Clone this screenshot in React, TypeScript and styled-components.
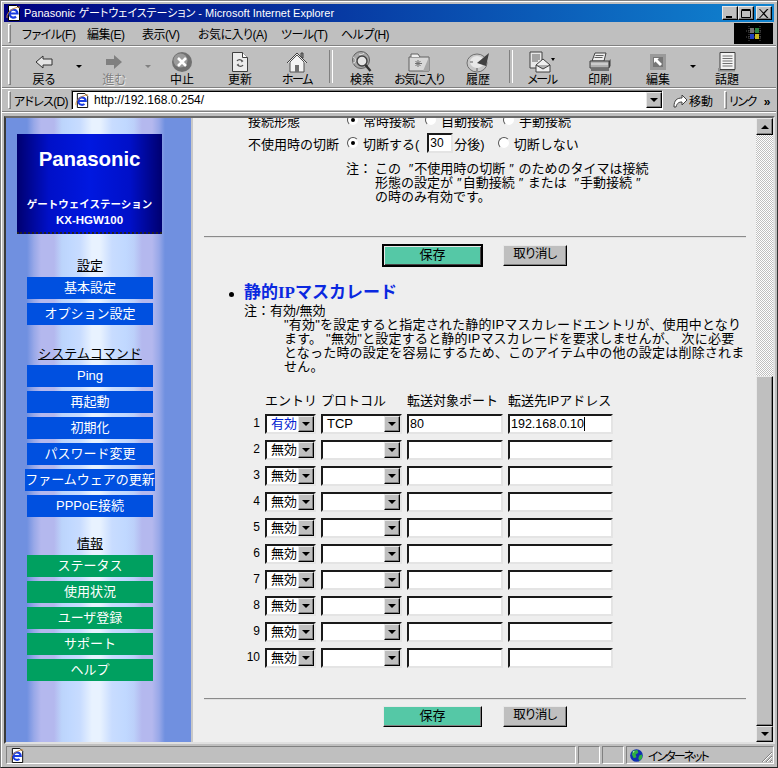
import React from "react";
import styled, { createGlobalStyle, css } from "styled-components";

const FONT = `"Liberation Sans", "Noto Sans CJK JP", sans-serif`;
const FACE = "#bfbfbf";

const Global = createGlobalStyle`
  html, body { margin: 0; padding: 0; background: ${FACE}; }
  * { box-sizing: border-box; }
`;

const sunken = css`
  border-style: solid;
  border-width: 2px;
  border-color: #1a1a1a #e4e4e4 #e4e4e4 #1a1a1a;
`;
const raised = css`
  border-style: solid;
  border-width: 1px;
  border-color: #e8e8e8 #000 #000 #e8e8e8;
  box-shadow: inset -1px -1px 0 #808080;
`;
const checker = css`
  background: repeating-conic-gradient(#fff 0 25%, ${FACE} 0 50%) 0 0 / 2px 2px;
`;
const palt = css`
  font-feature-settings: "palt";
`;

const Win = styled.div`
  width: 778px;
  height: 768px;
  overflow: hidden;
  background: ${FACE};
  padding: 4px 4px 0 4px;
  display: flex;
  flex-direction: column;
  font: 12px ${FONT};
  color: #000;
  border: 1px solid #808080;
  border-right-color: #333;
  border-bottom-color: #222;
  box-shadow: inset 1px 1px 0 #fff;
`;
const Title = styled.div`
  height: 18px;
  margin: -1px -1px 0 -1px;
  display: flex;
  align-items: center;
  gap: 2px;
  padding: 0 2px 0 2px;
  background: linear-gradient(90deg, #000080, #1084d0);
  color: #fff;
  flex: none;
  white-space: nowrap;
`;
const TitleText = styled.span`
  flex: 1;
  font-size: 11px;
  line-height: 18px;
  ${palt};
`;
const CapBtn = styled.div<{ $gap?: boolean }>`
  width: 16px;
  height: 14px;
  background: ${FACE};
  ${raised};
  margin-left: ${(p) => (p.$gap ? 2 : 0)}px;
  display: flex;
  align-items: center;
  justify-content: center;
`;
const CapGroup = styled.div`
  display: flex;
  flex: none;
`;
const Band = styled.div<{ $h: number }>`
  height: ${(p) => p.$h}px;
  margin: 0 -3px 1px;
  flex: none;
  display: flex;
  align-items: stretch;
  border-bottom: 1px solid #808080;
  box-shadow: 0 1px 0 #fff;
  padding: 0 3px;
`;
const Grip = styled.div`
  width: 3px;
  margin: 2px 0 2px 3px;
  border: 1px solid;
  border-color: #fff #808080 #808080 #fff;
  flex: none;
`;
const Menu = styled.div`
  flex: 1;
  display: flex;
  align-items: center;
  white-space: nowrap;
  padding-left: 11px;
`;
const MenuItem = styled.span<{ $w: number }>`
  width: ${(p) => p.$w}px;
  flex: none;
  font-size: 12px;
  letter-spacing: -0.5px;
  ${palt};
`;
const Throbber = styled.div`
  width: 39px;
  background: #000;
  margin: 1px 0;
  display: flex;
  align-items: center;
  justify-content: center;
  flex: none;
`;
const ToolStrip = styled.div`
  flex: 1;
  display: flex;
  padding-left: 4px;
`;
const Tool = styled.div<{ $w: number; $off?: boolean; $tight?: boolean }>`
  width: ${(p) => p.$w}px;
  flex: none;
  display: flex;
  flex-direction: column;
  align-items: center;
  padding-top: 4px;
  font-size: 12px;
  line-height: 14px;
  letter-spacing: ${(p) => (p.$tight ? -1.5 : 0)}px;
  ${palt};
  color: ${(p) => (p.$off ? "#808080" : "#000")};
  text-shadow: ${(p) => (p.$off ? "1px 1px 0 #e8e8e8" : "none")};
  white-space: nowrap;
`;
const ToolIconBox = styled.div`
  height: 22px;
  display: flex;
  align-items: center;
  justify-content: center;
`;
const DropBox = styled.div<{ $w: number; $off?: boolean }>`
  width: ${(p) => p.$w}px;
  flex: none;
  display: flex;
  justify-content: center;
  padding-top: 18px;
  &::before {
    content: "";
    width: 0;
    height: 0;
    border: 3px solid transparent;
    border-top: 3px solid ${(p) => (p.$off ? "#808080" : "#000")};
  }
`;
const ToolSep = styled.div`
  width: 12px;
  flex: none;
  display: flex;
  justify-content: center;
  padding: 3px 0 4px;
  &::before {
    content: "";
    width: 2px;
    border-left: 1px solid #808080;
    border-right: 1px solid #fff;
  }
`;
const AddrLabel = styled.span`
  flex: none;
  width: 60px;
  padding-left: 3px;
  align-self: center;
  font-size: 12px;
  letter-spacing: -0.7px;
  white-space: nowrap;
  ${palt};
`;
const AddrField = styled.div`
  width: 592px;
  flex: none;
  background: #fff;
  margin: 1px 0 0;
  height: 20px;
  border: 1px solid;
  border-color: #808080 #fff #fff #808080;
  box-shadow: inset 1px 1px 0 #000;
  display: flex;
  align-items: center;
  padding-left: 3px;
  gap: 4px;
  font-size: 12px;
`;
const AddrValue = styled.span`
  flex: 1;
`;
const Arrow = styled.span<{ $size?: number }>`
  width: 0;
  height: 0;
  border: ${(p) => p.$size ?? 4}px solid transparent;
  border-top-color: #000;
  border-bottom-width: 0;
`;
const ArrowUp = styled(Arrow)`
  border-top-width: 0;
  border-top-color: transparent;
  border-bottom-width: ${(p) => p.$size ?? 4}px;
  border-bottom-color: #000;
`;
const AddrDrop = styled.div`
  width: 16px;
  height: 16px;
  background: ${FACE};
  ${raised};
  display: flex;
  align-items: center;
  justify-content: center;
`;
const GoBtn = styled.div`
  width: 55px;
  flex: none;
  display: flex;
  align-items: center;
  justify-content: flex-end;
  gap: 1px;
  font-size: 12px;
  padding-right: 5px;
`;
const LinksSep = styled.div`
  width: 3px;
  margin: 2px 0 2px 6px;
  border: 1px solid;
  border-color: #fff #808080 #808080 #fff;
  flex: none;
`;
const Links = styled.span`
  flex: 1;
  align-self: center;
  padding-left: 2px;
  font-size: 12px;
  letter-spacing: -1.5px;
  white-space: nowrap;
  ${palt};
`;
const Chev = styled.b`
  font-size: 12px;
  margin-left: 8px;
  letter-spacing: 0;
`;

const Frame = styled.div`
  height: 628px;
  margin: 3px -2px 0 -1px;
  flex: none;
  display: flex;
  border: 2px solid;
  border-color: #6a6a6a #e0e0e0 #e0e0e0 #3a3a3a;
  overflow: hidden;
  background: #fff;
`;
const Side = styled.nav`
  width: 187px;
  flex: none;
  padding: 16px 0 0 11px;
  border-right: 2px solid #c8c8c8;
  background: linear-gradient(
    90deg,
    #7090e0 0,
    #7090e0 21px,
    #98a8e8 28px,
    #b4b8ee 35px,
    #b4b8ee 48px,
    #bcd4fb 56px,
    #c0d8ff 64px,
    #c8dcff 74px,
    #e8f2ff 86px,
    #e8f2ff 94px,
    #c8dcff 106px,
    #c0d8ff 120px,
    #bcd0fa 128px,
    #b4b8ee 136px,
    #b4b8ee 146px,
    #98a8e8 153px,
    #7090e0 159px,
    #7090e0 100%
  );
`;
const Logo = styled.div`
  width: 145px;
  height: 100px;
  background: linear-gradient(90deg, #000070 0, #0010c8 22%, #0018e0 50%, #0010c8 78%, #000070 100%);
  border-bottom: 2px dotted #222;
  color: #fff;
  display: flex;
  flex-direction: column;
  align-items: center;
`;
const LogoBrand = styled.div`
  font: bold 20.5px/22px "Liberation Sans", sans-serif;
  margin-top: 14px;
  letter-spacing: -0.1px;
`;
const LogoSub = styled.div`
  font: bold 10.5px/16px ${FONT};
  margin-top: 26px;
  white-space: nowrap;
`;
const LogoModel = styled.div`
  font: bold 11.5px/16px ${FONT};
  white-space: nowrap;
`;
const NavHead = styled.div<{ $top: number }>`
  width: 126px;
  margin: ${(p) => p.$top}px 0 4px 10px;
  height: 14px;
  line-height: 14px;
  text-align: center;
  font-size: 13px;
  text-decoration: underline;
  white-space: nowrap;
  color: #000;
`;
const NavBtn = styled.div<{ $green?: boolean; $wide?: boolean }>`
  width: ${(p) => (p.$wide ? 130 : 126)}px;
  height: 22px;
  margin: 0 0 4px ${(p) => (p.$wide ? 8 : 10)}px;
  background: ${(p) => (p.$green ? "#00a060" : "#0050e0")};
  color: #fff;
  font-size: 13px;
  line-height: 21px;
  text-align: center;
  white-space: nowrap;
`;
const MainCol = styled.main`
  flex: 1;
  min-width: 0;
  overflow: hidden;
  background: #eeeeee;
  padding: 0 10px 0 11px;
  font-size: 13px;
  white-space: nowrap;
`;
const Cut = styled.div`
  height: 16px;
  margin-top: -6px;
  padding-left: 44px;
  display: flex;
  align-items: center;
`;
const CutLabel = styled.span`
  width: 99px;
`;
const CutOpt = styled.span`
  display: inline-flex;
  align-items: center;
  margin-right: 10px;
`;
const FormRow = styled.div`
  height: 20px;
  margin-top: 5px;
  padding-left: 44px;
  display: flex;
  align-items: center;
`;
const FormLabel = styled.span`
  width: 99px;
  flex: none;
`;
const Radio = styled.span<{ $on?: boolean }>`
  width: 12px;
  height: 12px;
  border-radius: 50%;
  flex: none;
  background: #fff;
  border: 1px solid;
  border-color: #555 #eee #eee #555;
  display: inline-flex;
  align-items: center;
  justify-content: center;
  margin-right: 4px;
  &::after {
    content: "";
    width: 4px;
    height: 4px;
    border-radius: 50%;
    background: ${(p) => (p.$on ? "#000" : "transparent")};
  }
`;
const MinInput = styled.input`
  width: 26px;
  height: 20px;
  margin: 0 1px 0 8px;
  padding: 0 0 0 1px;
  background: #fff;
  font: 12px ${FONT};
  outline: none;
  ${sunken};
`;
const Spaced = styled.span`
  margin-right: 13px;
`;
const NoteBlock = styled.div`
  margin: 9px 0 0 142px;
  display: flex;
  line-height: 14px;
`;
const NoteTag = styled.span`
  width: 29px;
  flex: none;
`;
const Q = styled.span`
  padding-left: 4px;
  padding-right: 1px;
`;
const Rule = styled.div<{ $top: number }>`
  height: 2px;
  margin-top: ${(p) => p.$top}px;
  background: #8a8a8a;
  border-bottom: 1px solid #e0e0e0;
`;
const Actions = styled.div<{ $top: number }>`
  display: flex;
  margin: ${(p) => p.$top}px 0 0 179px;
  height: 21px;
  gap: 21px;
`;
const BaseBtn = styled.button`
  height: 21px;
  padding: 0 0 2px;
  font: 13px/15px ${FONT};
  color: #000;
  ${raised};
`;
const SaveBtn = styled(BaseBtn)<{ $focus?: boolean }>`
  width: 99px;
  background: #55c8a6;
  ${(p) => p.$focus && "outline: 1px solid #000; border-color: #000; box-shadow: inset 1px 1px 0 #e8e8e8, inset -1px -1px 0 #444;"}
`;
const CancelBtn = styled(BaseBtn)`
  width: 64px;
  background: ${FACE};
  font-size: 12.5px;
  letter-spacing: -0.6px;
  ${palt};
`;
const SectionHead = styled.div`
  display: flex;
  align-items: center;
  height: 20px;
  margin: 17px 0 0 25px;
`;
const Bullet = styled.span`
  width: 5px;
  height: 5px;
  border-radius: 50%;
  background: #000;
  margin-right: 10px;
  margin-top: 3px;
`;
const SectionTitle = styled.h2`
  margin: 0;
  font: bold 17px/20px "Liberation Serif", "Noto Sans CJK JP", serif;
  color: #0a28e0;
`;
const Notes = styled.div`
  margin: 1px 0 0 40px;
  line-height: 14px;
  font-size: 13px;
`;
const NoteBody = styled.div`
  padding-left: 40px;
  letter-spacing: 0.2px;
`;
const HeadGrid = styled.div`
  display: grid;
  grid-template-columns: 25px 51px 81px 96px 105px;
  column-gap: 5px;
  height: 14px;
  line-height: 14px;
  margin: 20px 0 0 31px;
`;
const HeadCell = styled.div<{ $col: number }>`
  grid-column: ${(p) => p.$col};
`;
const Grid = styled.div`
  display: grid;
  grid-template-columns: 25px 51px 81px 96px 105px;
  column-gap: 5px;
  grid-auto-rows: 20px;
  row-gap: 6px;
  margin: 6px 0 0 31px;
`;
const Num = styled.div`
  text-align: right;
  font-size: 12px;
  line-height: 18px;
`;
const Sel = styled.div<{ $on?: boolean }>`
  height: 20px;
  background: #fff;
  ${sunken};
  display: flex;
  align-items: center;
  padding-left: 4px;
  font-size: 13px;
  line-height: 14px;
  color: ${(p) => (p.$on ? "#0020d0" : "#000")};
`;
const SelBtn = styled.div`
  width: 16px;
  height: 16px;
  margin-left: auto;
  background: ${FACE};
  ${raised};
  display: flex;
  align-items: center;
  justify-content: center;
  flex: none;
`;
const Field = styled.input`
  height: 20px;
  min-width: 0;
  width: 100%;
  background: #fff;
  padding: 0 0 1px 1px;
  font: 12.5px ${FONT};
  outline: none;
  ${sunken};
`;
const Caret = styled.div`
  position: relative;
  &::after {
    content: "";
    position: absolute;
    left: 76px;
    top: 3px;
    width: 1px;
    height: 14px;
    background: #000;
  }
`;
const Scroll = styled.div`
  width: 17px;
  flex: none;
  display: flex;
  flex-direction: column;
  ${checker};
`;
const ScrollBtn = styled.div<{ $h?: number }>`
  width: 17px;
  height: ${(p) => p.$h ?? 17}px;
  flex: none;
  background: ${FACE};
  ${raised};
  display: flex;
  align-items: center;
  justify-content: center;
`;
const ScrollGap = styled.div`
  height: 241px;
  flex: none;
`;
const Thumb = styled.div`
  flex: 1;
  background: ${FACE};
  ${raised};
`;
const Status = styled.div`
  height: 18px;
  margin: 2px -3px 0;
  padding: 0 2px 0 4px;
  display: flex;
  gap: 2px;
  flex: none;
`;
const StatusCell = styled.div<{ $w?: number }>`
  ${(p) => (p.$w ? `width: ${p.$w}px; flex: none;` : "flex: 1;")}
  border: 1px solid;
  border-color: #808080 #fff #fff #808080;
  display: flex;
  align-items: center;
  padding-left: 3px;
  gap: 5px;
  font-size: 12px;
  white-space: nowrap;
  letter-spacing: -2px;
  ${palt};
`;
const SizeGrip = styled.div`
  margin-left: auto;
  align-self: flex-end;
  display: flex;
`;

const IeLogo = ({ s = 14, page = false }: { s?: number; page?: boolean }) => (
  <svg width={s} height={s} viewBox="0 0 16 16">
    {page && <path d="M2.5 0.5h8l3 3v12h-11z" fill="#fff" stroke="#000" />}
    <path d="M4 8.5h7.5a4 4 0 1 0-1.4 3.2" fill="none" stroke="#1a3ce0" strokeWidth="2.2" />
    <path d="M1 13 C0 7 8 2 14 2" fill="none" stroke="#d89030" strokeWidth="0.9" />
  </svg>
);
const Globe = () => (
  <svg width="13" height="15" viewBox="0 0 14 16">
    <circle cx="7" cy="8" r="6.8" fill="#1030b0" />
    <path d="M3 3l5-1 1 3-3 2 1 3-3 1-2-4zM10 8l3-1 0 4-3 3-1-3z" fill="#30b040" />
    <path d="M3 4l2-1-1 2z" fill="#e0ffe0" />
  </svg>
);
const Flag = () => (
  <svg width="24" height="22" viewBox="0 0 24 22">
    <path d="M4 8h16M4 14h16M7 3v16M18 3v16" stroke="#555" strokeDasharray="1 1" />
    <rect x="8" y="5" width="4" height="5" fill="#707070" />
    <rect x="13" y="5" width="4" height="5" fill="#2a8040" />
    <rect x="8" y="11" width="4" height="5" fill="#2040c0" />
    <rect x="13" y="11" width="4" height="5" fill="#c8b820" />
  </svg>
);

const IconBack = () => (
  <svg width="18" height="14" viewBox="0 0 18 14">
    <path d="M1 7 8 1v3h9v6H8v3z" fill="#e4e4e4" stroke="#303030" />
  </svg>
);
const IconForward = () => (
  <svg width="18" height="16" viewBox="0 0 18 16">
    <path d="M17 8 9 1v4H1v6h8v4z" fill="#808080" />
  </svg>
);
const IconStop = () => (
  <svg width="22" height="22" viewBox="0 0 22 22">
    <circle cx="11" cy="11" r="10" fill="#707070" />
    <circle cx="9.5" cy="9.5" r="7" fill="#9a9a9a" />
    <path d="M7 7l8 8M15 7l-8 8" stroke="#fff" strokeWidth="2.6" />
  </svg>
);
const IconRefresh = () => (
  <svg width="18" height="22" viewBox="0 0 18 22">
    <path d="M1.5 1.5h10l5 5v14h-15z" fill="#ececec" stroke="#404040" />
    <path d="M11.5 1.5v5h5" fill="#fff" stroke="#404040" />
    <path d="M6 10a3 3 0 0 1 5 0M12 14a3 3 0 0 1-5 0" fill="none" stroke="#505050" strokeWidth="1.3" />
    <path d="M10 8.5l2.5 1.5-2 1.5zM8 15.5l-2.5-1.5 2-1.5z" fill="#505050" />
  </svg>
);
const IconHome = () => (
  <svg width="22" height="22" viewBox="0 0 22 22">
    <path d="M15 2h2v5h-2z" fill="#909090" stroke="#404040" />
    <path d="M1 12 11 2l10 10" fill="#e8e8e8" stroke="#404040" />
    <path d="M4 11v10h14V11L11 4z" fill="#f4f4f4" stroke="#505050" />
    <path d="M9 14h4v7H9z" fill="#707070" />
  </svg>
);
const IconSearch = () => (
  <svg width="22" height="22" viewBox="0 0 22 22">
    <circle cx="10" cy="9" r="8.5" fill="#a8a8a8" stroke="#606060" />
    <circle cx="11" cy="10" r="5" fill="#e4e4e4" stroke="#404040" strokeWidth="1.4" />
    <path d="M2 6c4 2 3 6 0 6M13 2c-2 2-4 2-5 1" stroke="#e0e0e0" fill="none" />
    <path d="M14.5 14l5 6" stroke="#303030" strokeWidth="2.4" />
  </svg>
);
const IconFav = () => (
  <svg width="22" height="20" viewBox="0 0 22 20">
    <path d="M1 5h20v14H1z" fill="#d8d8d8" stroke="#606060" />
    <path d="M3 5V2h7l2 3" fill="#f0f0f0" stroke="#606060" />
    <path d="M21 5v14h-6z" fill="#a8a8a8" />
    <path d="M10 8v7M7 11.5h7M7.5 9l5 5M12.5 9l-5 5" stroke="#707070" />
  </svg>
);
const IconHistory = () => (
  <svg width="24" height="22" viewBox="0 0 24 22">
    <ellipse cx="11" cy="12" rx="10" ry="9" fill="#c8c8c8" stroke="#707070" />
    <ellipse cx="11" cy="11" rx="7" ry="6" fill="#e8e8e8" />
    <path d="M11 12 23 2l-3 13z" fill="#404040" />
    <path d="M4 11h3M11 17v3" stroke="#606060" />
  </svg>
);
const IconMail = () => (
  <svg width="26" height="22" viewBox="0 0 26 22">
    <path d="M1 1h12v16H1z" fill="#e8e8e8" stroke="#404040" />
    <path d="M3 4h8M3 6h8M3 8h8M3 10h6" stroke="#606060" />
    <path d="M7 14l7-6 7 6v7H7z" fill="#f0f0f0" stroke="#404040" />
    <path d="M7 14l7 4 7-4" fill="#b0b0b0" stroke="#404040" />
    <path d="M22 7h4l-2 3z" fill="#000" />
  </svg>
);
const IconPrint = () => (
  <svg width="22" height="20" viewBox="0 0 22 20">
    <path d="M6 1h11l-2 8H3z" fill="#f0f0f0" stroke="#404040" />
    <path d="M6.5 3.5h8M5.5 5.5h8" stroke="#606060" />
    <path d="M1 9h19v7H1z" fill="#b0b0b0" stroke="#404040" />
    <path d="M20 9l1.5-2v7L20 16" fill="#404040" />
    <path d="M2 16h18v3H2z" fill="#707070" />
    <path d="M2 12h17" stroke="#e8e8e8" />
  </svg>
);
const IconEdit = () => (
  <svg width="18" height="18" viewBox="0 0 18 18">
    <rect width="16" height="16" x="1" y="1" fill="#9a9a9a" />
    <rect width="10" height="10" x="4" y="4" fill="#777" />
    <path d="M5 5h5L8.5 6.5 13 11l-2 2-4.5-4.5L5 10z" fill="#fff" />
  </svg>
);
const IconTalk = () => (
  <svg width="20" height="22" viewBox="0 0 20 22">
    <path d="M3 1.5h15v17H3z" fill="#f4f4f4" stroke="#404040" />
    <path d="M1 19v-2h2v2h15v1.5H1z" fill="#909090" />
    <path d="M5.5 5h10M5.5 7.5h10M5.5 10h10M5.5 12.5h10M5.5 15h10" stroke="#707070" />
  </svg>
);
const IconGo = () => (
  <svg width="16" height="16" viewBox="0 0 16 16">
    <path d="M2 15C2 8 5 6 10 6V3l5 5-5 5v-3c-3 0-5 1-6 5z" fill="#fff" stroke="#404040" />
  </svg>
);

const Cap = ({ k }: { k: "min" | "max" | "x" }) => (
  <svg width="10" height="9" viewBox="0 0 10 9">
    {k === "min" && <path d="M1 7h6v2H1z" fill="#000" />}
    {k === "max" && <path d="M0.5 1.5h9v7h-9zM0.5 0.5h9" fill="none" stroke="#000" />}
    {k === "x" && <path d="M1 0l3.5 3.5L8 0h1.5L5.5 4.5l4 4.5H8L4.5 5.5 1 9H0l4-4.5L0 0z" fill="#000" />}
  </svg>
);

const menus: [string, number][] = [
  ["ファイル(F)", 65],
  ["編集(E)", 55],
  ["表示(V)", 56],
  ["お気に入り(A)", 83],
  ["ツール(T)", 60],
  ["ヘルプ(H)", 60],
];

const sysCmds = ["Ping", "再起動", "初期化", "パスワード変更"];
const info = ["ステータス", "使用状況", "ユーザ登録", "サポート", "ヘルプ"];
const rows = [1, 2, 3, 4, 5, 6, 7, 8, 9, 10];

export default function App() {
  return (
    <>
      <Global />
      <Win>
        <Title>
          <IeLogo s={16} page />
          <TitleText>Panasonic ゲートウェイステーション - Microsoft Internet Explorer</TitleText>
          <CapGroup>
            <CapBtn><Cap k="min" /></CapBtn>
            <CapBtn><Cap k="max" /></CapBtn>
            <CapBtn $gap><Cap k="x" /></CapBtn>
          </CapGroup>
        </Title>
        <Band $h={24}>
          <Grip />
          <Menu>
            {menus.map(([m, w]) => (
              <MenuItem key={m} $w={w}>{m}</MenuItem>
            ))}
          </Menu>
          <Throbber><Flag /></Throbber>
        </Band>
        <Band $h={41}>
          <Grip />
          <ToolStrip>
            <Tool $w={58}><ToolIconBox><IconBack /></ToolIconBox>戻る</Tool>
            <DropBox $w={12} />
            <Tool $w={58} $off><ToolIconBox><IconForward /></ToolIconBox>進む</Tool>
            <DropBox $w={10} $off />
            <Tool $w={58}><ToolIconBox><IconStop /></ToolIconBox>中止</Tool>
            <Tool $w={58}><ToolIconBox><IconRefresh /></ToolIconBox>更新</Tool>
            <Tool $w={56} $tight><ToolIconBox><IconHome /></ToolIconBox>ホーム</Tool>
            <ToolSep />
            <Tool $w={50}><ToolIconBox><IconSearch /></ToolIconBox>検索</Tool>
            <Tool $w={64} $tight><ToolIconBox><IconFav /></ToolIconBox>お気に入り</Tool>
            <Tool $w={54}><ToolIconBox><IconHistory /></ToolIconBox>履歴</Tool>
            <ToolSep />
            <Tool $w={50} $tight><ToolIconBox><IconMail /></ToolIconBox>メール</Tool>
            <Tool $w={66}><ToolIconBox><IconPrint /></ToolIconBox>印刷</Tool>
            <Tool $w={50}><ToolIconBox><IconEdit /></ToolIconBox>編集</Tool>
            <DropBox $w={20} />
            <Tool $w={48}><ToolIconBox><IconTalk /></ToolIconBox>話題</Tool>
          </ToolStrip>
        </Band>
        <Band $h={23}>
          <Grip />
          <AddrLabel>アドレス(D)</AddrLabel>
          <AddrField>
            <IeLogo s={15} page />
            <AddrValue>http://192.168.0.254/</AddrValue>
            <AddrDrop><Arrow /></AddrDrop>
          </AddrField>
          <GoBtn><IconGo />移動</GoBtn>
          <LinksSep />
          <Links>リンク<Chev>»</Chev></Links>
        </Band>
        <Frame>
          <Side>
            <Logo>
              <LogoBrand>Panasonic</LogoBrand>
              <LogoSub>ゲートウェイステーション</LogoSub>
              <LogoModel>KX-HGW100</LogoModel>
            </Logo>
            <NavHead $top={25}>設定</NavHead>
            <NavBtn>基本設定</NavBtn>
            <NavBtn>オプション設定</NavBtn>
            <NavHead $top={22}>システムコマンド</NavHead>
            {sysCmds.map((c) => (
              <NavBtn key={c}>{c}</NavBtn>
            ))}
            <NavBtn $wide>ファームウェアの更新</NavBtn>
            <NavBtn>PPPoE接続</NavBtn>
            <NavHead $top={20}>情報</NavHead>
            {info.map((c) => (
              <NavBtn key={c} $green>{c}</NavBtn>
            ))}
          </Side>
          <MainCol>
            <Cut>
              <CutLabel>接続形態</CutLabel>
              <CutOpt><Radio $on />常時接続</CutOpt>
              <CutOpt><Radio />自動接続</CutOpt>
              <CutOpt><Radio />手動接続</CutOpt>
            </Cut>
            <FormRow>
              <FormLabel>不使用時の切断</FormLabel>
              <Radio $on />
              <span>切断する(</span>
              <MinInput defaultValue="30" />
              <Spaced>分後)</Spaced>
              <Radio />
              <span>切断しない</span>
            </FormRow>
            <NoteBlock>
              <NoteTag>注：</NoteTag>
              <div>
                この <Q>″</Q>不使用時の切断<Q>″</Q> のためのタイマは接続<br />
                形態の設定が<Q>″</Q>自動接続<Q>″</Q> または <Q>″</Q>手動接続<Q>″</Q><br />
                の時のみ有効です。
              </div>
            </NoteBlock>
            <Rule $top={32} />
            <Actions $top={7}>
              <SaveBtn $focus>保存</SaveBtn>
              <CancelBtn>取り消し</CancelBtn>
            </Actions>
            <SectionHead>
              <Bullet />
              <SectionTitle>静的IPマスカレード</SectionTitle>
            </SectionHead>
            <Notes>
              <div>注：有効/無効</div>
              <NoteBody>
                "有効"を設定すると指定された静的IPマスカレードエントリが、使用中となり<br />
                ます。 "無効"と設定すると静的IPマスカレードを要求しませんが、 次に必要<br />
                となった時の設定を容易にするため、このアイテム中の他の設定は削除されま<br />
                せん。
              </NoteBody>
            </Notes>
            <HeadGrid>
              <HeadCell $col={2}>エントリ</HeadCell>
              <HeadCell $col={3}>プロトコル</HeadCell>
              <HeadCell $col={4}>転送対象ポート</HeadCell>
              <HeadCell $col={5}>転送先IPアドレス</HeadCell>
            </HeadGrid>
            <Grid>
              {rows.map((n) => (
                <React.Fragment key={n}>
                  <Num>{n}</Num>
                  <Sel $on={n === 1}>
                    {n === 1 ? "有効" : "無効"}
                    <SelBtn><Arrow /></SelBtn>
                  </Sel>
                  <Sel>
                    {n === 1 ? "TCP" : ""}
                    <SelBtn><Arrow /></SelBtn>
                  </Sel>
                  <Field defaultValue={n === 1 ? "80" : ""} />
                  {n === 1 ? (
                    <Caret><Field defaultValue="192.168.0.10" /></Caret>
                  ) : (
                    <Field defaultValue="" />
                  )}
                </React.Fragment>
              ))}
            </Grid>
            <Rule $top={30} />
            <Actions $top={6}>
              <SaveBtn>保存</SaveBtn>
              <CancelBtn>取り消し</CancelBtn>
            </Actions>
          </MainCol>
          <Scroll>
            <ScrollBtn><ArrowUp /></ScrollBtn>
            <ScrollGap />
            <Thumb />
            <ScrollBtn $h={16}><Arrow /></ScrollBtn>
          </Scroll>
        </Frame>
        <Status>
          <StatusCell $w={570}><IeLogo s={15} page /></StatusCell>
          <StatusCell $w={22} />
          <StatusCell $w={22} />
          <StatusCell>
            <Globe />
            インターネット
            <SizeGrip>
              <svg width="12" height="12" viewBox="0 0 12 12">
                <path d="M11 1L1 11M11 5L5 11M11 9L9 11" stroke="#808080" />
                <path d="M11 2L2 11M11 6L6 11M11 10L10 11" stroke="#fff" />
              </svg>
            </SizeGrip>
          </StatusCell>
        </Status>
      </Win>
    </>
  );
}
